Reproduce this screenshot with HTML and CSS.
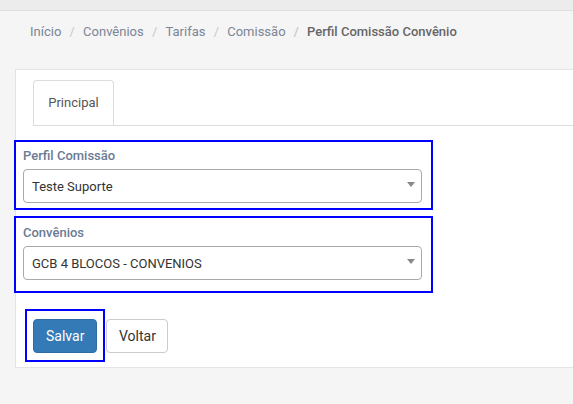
FILE: index.html
```html
<!DOCTYPE html>
<html lang="pt-BR">
<head>
<meta charset="utf-8">
<title>Perfil Comissão Convênio</title>
<link rel="stylesheet" href="styles.css">
</head>
<body>
<div class="topbar"></div>
<ol class="breadcrumb">
  <li><a href="#">Início</a></li>
  <li><a href="#">Convênios</a></li>
  <li><a href="#">Tarifas</a></li>
  <li><a href="#">Comissão</a></li>
  <li class="active">Perfil Comissão Convênio</li>
</ol>
<div class="panel">
  <ul class="tabs">
    <li class="tab active">Principal</li>
  </ul>
  <div class="group group-first">
    <label class="label">Perfil Comissão</label>
    <div class="select"><span>Teste Suporte</span><i class="caret"></i></div>
  </div>
  <div class="group group-second">
    <label class="label">Convênios</label>
    <div class="select"><span>GCB 4 BLOCOS - CONVENIOS</span><i class="caret"></i></div>
  </div>
  <div class="actions">
    <div class="mark"><button class="btn btn-primary">Salvar</button></div>
    <button class="btn btn-default">Voltar</button>
  </div>
</div>
</body>
</html>
```
FILE: styles.css
```css
*, *::before, *::after {
  box-sizing: border-box;
}
html, body {
  margin: 0;
  padding: 0;
}
body {
  background: #f5f5f5;
  font-family: Roboto, "Liberation Sans", Arial, sans-serif;
  font-size: 13px;
  color: #333;
  width: 573px;
  height: 404px;
  overflow: hidden;
}
.topbar {
  height: 11px;
  background: #ececec;
  border-bottom: 1px solid #dedede;
}
.breadcrumb {
  list-style: none;
  margin: 0;
  padding: 12px 0 0 30px;
  height: 38px;
  display: flex;
  line-height: 18px;
  font-size: 13px;
}
.breadcrumb li + li::before {
  content: "/";
  color: #c8c8c8;
  padding: 0 8.2px 0 8.2px;
}
.breadcrumb a {
  color: #7b8697;
  text-decoration: none;
}
.breadcrumb .active {
  color: #666;
  font-weight: 500;
}
.panel {
  margin: 20px -20px 0 15px;
  background: #fff;
  border: 1px solid #e4e4e4;
  border-right: none;
  padding: 10px 0 5px 0;
}
.tabs {
  list-style: none;
  margin: 0 0 14px 17px;
  padding: 0;
  display: flex;
  border-bottom: 1px solid #ddd;
}
.tab {
  width: 81px;
  height: 45px;
  line-height: 44px;
  text-align: center;
  color: #555;
  border: 1px solid #ddd;
  border-bottom: none;
  border-radius: 4px 4px 0 0;
}
.group {
  width: 419px;
  margin-left: -2px;
  border: 2px solid #0000ff;
  padding: 0 9px 0 7px;
  display: flex;
  flex-direction: column;
}
.group-first {
  padding-top: 5px;
  padding-bottom: 5px;
}
.group-second {
  margin-top: 6px;
  padding-top: 6px;
  padding-bottom: 11px;
}
.label {
  font-weight: 500;
  color: #6b7b93;
  font-size: 13px;
  line-height: 17px;
  margin-bottom: 5px;
}
.select {
  height: 34px;
  border: 1px solid #aaa;
  border-radius: 4px;
  display: flex;
  align-items: center;
  justify-content: space-between;
  padding: 0 6px 0 8px;
  color: #333;
  font-size: 13px;
}
.caret {
  width: 0;
  height: 0;
  border-left: 4px solid transparent;
  border-right: 4px solid transparent;
  border-top: 5px solid #888;
  margin-top: -3px;
}
.actions {
  display: flex;
  align-items: center;
  margin-top: 16px;
  margin-left: 9px;
}
.mark {
  border: 2px solid #0000ff;
  padding: 8px 6px 7px 6px;
}
.btn {
  font-family: Roboto, "Liberation Sans", Arial, sans-serif;
  font-size: 14px;
  height: 34px;
  border-radius: 4px;
  border: 1px solid transparent;
  padding: 0 12px;
  cursor: pointer;
}
.btn-primary {
  background: #337ab7;
  border-color: #2e6da4;
  color: #fff;
  width: 64px;
}
.btn-default {
  background: #fff;
  border-color: #ccc;
  color: #333;
  width: 62px;
  margin-left: 1px;
}
```
